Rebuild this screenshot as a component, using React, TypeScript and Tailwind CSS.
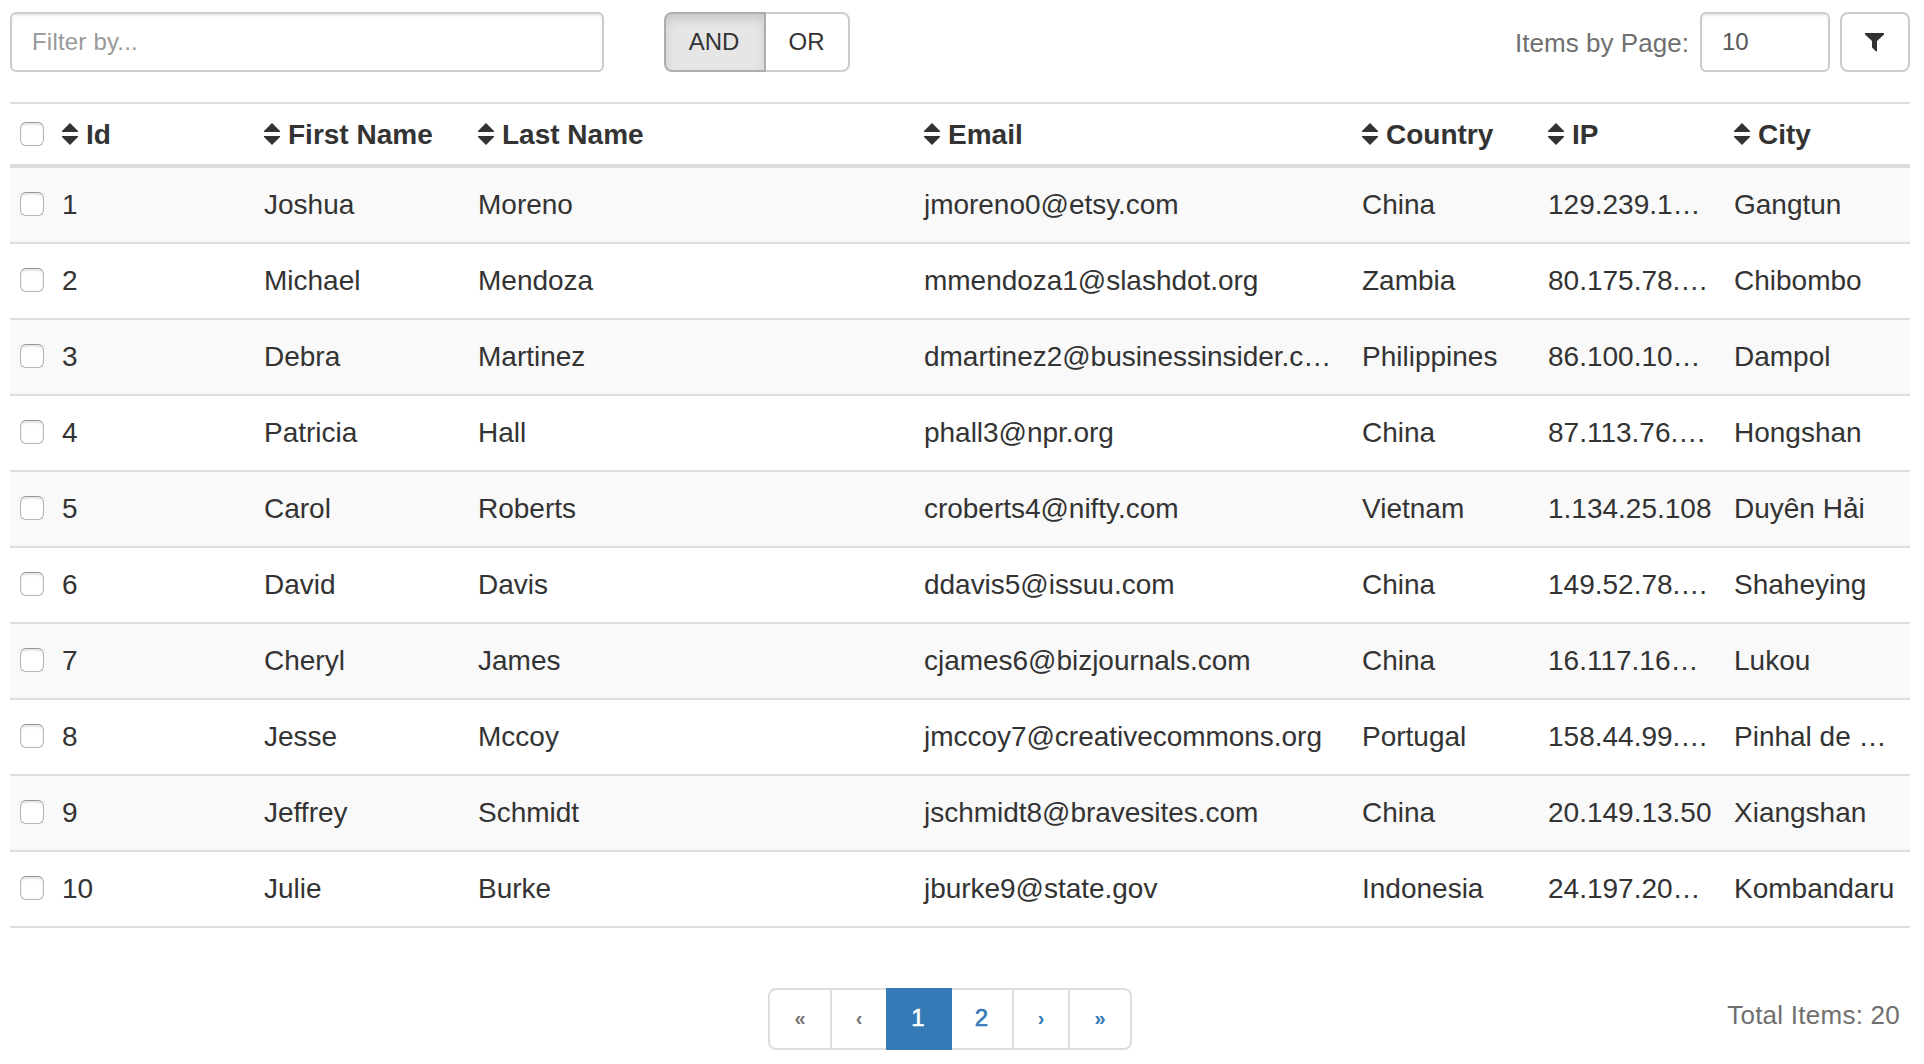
import React from "react";

type Row = [string, string, string, string, string, string, string];

const rows: Row[] = [
  ["1", "Joshua", "Moreno", "jmoreno0@etsy.com", "China", "129.239.1…", "Gangtun"],
  ["2", "Michael", "Mendoza", "mmendoza1@slashdot.org", "Zambia", "80.175.78.…", "Chibombo"],
  ["3", "Debra", "Martinez", "dmartinez2@businessinsider.c…", "Philippines", "86.100.10…", "Dampol"],
  ["4", "Patricia", "Hall", "phall3@npr.org", "China", "87.113.76.…", "Hongshan"],
  ["5", "Carol", "Roberts", "croberts4@nifty.com", "Vietnam", "1.134.25.108", "Duyên Hải"],
  ["6", "David", "Davis", "ddavis5@issuu.com", "China", "149.52.78.…", "Shaheying"],
  ["7", "Cheryl", "James", "cjames6@bizjournals.com", "China", "16.117.16…", "Lukou"],
  ["8", "Jesse", "Mccoy", "jmccoy7@creativecommons.org", "Portugal", "158.44.99.…", "Pinhal de …"],
  ["9", "Jeffrey", "Schmidt", "jschmidt8@bravesites.com", "China", "20.149.13.50", "Xiangshan"],
  ["10", "Julie", "Burke", "jburke9@state.gov", "Indonesia", "24.197.20…", "Kombandaru"],
];

const headers = ["Id", "First Name", "Last Name", "Email", "Country", "IP", "City"];

const GRID = "grid grid-cols-[52px_202px_214px_446px_438px_186px_186px_176px] items-center";

function Checkbox() {
  return (
    <input
      type="checkbox"
      className="ml-[10px] block h-6 w-6 appearance-none rounded-[6px] border border-[#b4b4b4] border-t-[#959595] bg-white shadow-[inset_0_2px_2px_rgba(0,0,0,0.1)]"
    />
  );
}

function SortIcon() {
  return (
    <svg width="16" height="22" viewBox="0 0 16 22" className="mr-2 shrink-0" fill="#333">
      <path d="M8 0L16 8V9H0V8Z" />
      <path d="M8 22L16 14V13H0V14Z" />
    </svg>
  );
}

export default function App() {
  return (
    <div className="flex h-[1064px] w-[1924px] flex-col bg-white pl-[10px] pr-[14px] pt-3 font-['Liberation_Sans',Arial,sans-serif] text-[28px] text-[#333]">
      <div className="flex h-[60px] items-center">
        <input
          placeholder="Filter by..."
          className="h-[60px] w-[594px] rounded-[6px] border-2 border-[#ccc] bg-white px-5 text-[24px] tracking-[0.2px] shadow-[inset_0_2px_2px_rgba(0,0,0,0.075)] placeholder:text-[#999]"
        />
        <div className="ml-[60px] flex h-[60px] text-[24px]">
          <button className="flex w-[102px] items-center justify-center rounded-l-[8px] border-2 border-[#adadad] bg-[#e6e6e6] pr-[2px] shadow-[inset_0_6px_10px_rgba(0,0,0,0.125)]">
            AND
          </button>
          <button className="flex w-[84px] items-center justify-center rounded-r-[8px] border-2 border-l-0 border-[#ccc] bg-white pr-[1px]">
            OR
          </button>
        </div>
        <span className="ml-auto mr-[11px] pt-[2px] text-[26px] tracking-[0.05px] text-[#6f6f6f]">Items by Page:</span>
        <input
          defaultValue="10"
          className="h-[60px] w-[130px] rounded-[6px] border-2 border-[#ccc] bg-white px-5 text-[24px] text-[#555] shadow-[inset_0_2px_2px_rgba(0,0,0,0.075)]"
        />
        <button className="ml-[10px] flex h-[60px] w-[70px] items-center justify-center rounded-[8px] border-2 border-[#ccc] bg-white">
          <svg width="20" height="20" viewBox="0 0 20 20" fill="#333">
            <path d="M0 1H19V2.500L12 9V19.600L10.600 19L7 15.600V9L0 2.500Z" />
          </svg>
        </button>
      </div>

      <div className="mt-[30px] border-t-2 border-[#ddd]">
        <div className={GRID + " h-16 border-b-4 border-[#ddd] font-bold"}>
          <Checkbox />
          {headers.map((h) => (
            <div key={h} className="flex items-center whitespace-nowrap leading-10">
              <SortIcon />
              <span className="pt-[2px]">{h}</span>
            </div>
          ))}
        </div>
        {rows.map((r) => (
          <div key={r[0]} className={GRID + " h-[76px] border-b-2 border-[#ddd] odd:bg-white even:bg-[#f9f9f9]"}>
            <div className="pb-[2px]">
              <Checkbox />
            </div>
            {r.map((c, i) => (
              <div key={i} className={i === 3 ? "whitespace-nowrap leading-10 tracking-[-0.03px]" : "whitespace-nowrap leading-10"}>
                {c}
              </div>
            ))}
          </div>
        ))}
      </div>

      <div className="mt-[60px] flex h-[62px] items-center">
        <div className="ml-[758px] flex h-[62px] text-[24px] text-[#337ab7]">
          <span className="flex w-16 items-center justify-center rounded-l-[8px] border-2 border-[#ddd] pb-[2px] text-[20px] font-bold text-[#777]">«</span>
          <span className="flex w-[54px] items-center justify-center border-y-2 border-[#ddd] pb-[2px] text-[20px] font-bold text-[#777]">‹</span>
          <span className="flex w-[66px] items-center justify-center bg-[#337ab7] pb-[2px] pr-[2px] text-white [-webkit-text-stroke:0.6px_white]">1</span>
          <span className="flex w-[62px] items-center justify-center border-y-2 border-r-2 border-[#ddd] pb-[2px] pr-[1px] [-webkit-text-stroke:0.6px_#337ab7]">2</span>
          <span className="flex w-[56px] items-center justify-center border-y-2 border-r-2 border-[#ddd] pb-[2px] text-[20px] font-bold">›</span>
          <span className="flex w-[62px] items-center justify-center rounded-r-[8px] border-2 border-l-0 border-[#ddd] pb-[2px] text-[20px] font-bold">»</span>
        </div>
        <span className="ml-auto mr-[10px] pb-2 text-[26px] tracking-[0.25px] text-[#6f6f6f]">Total Items: 20</span>
      </div>
    </div>
  );
}
